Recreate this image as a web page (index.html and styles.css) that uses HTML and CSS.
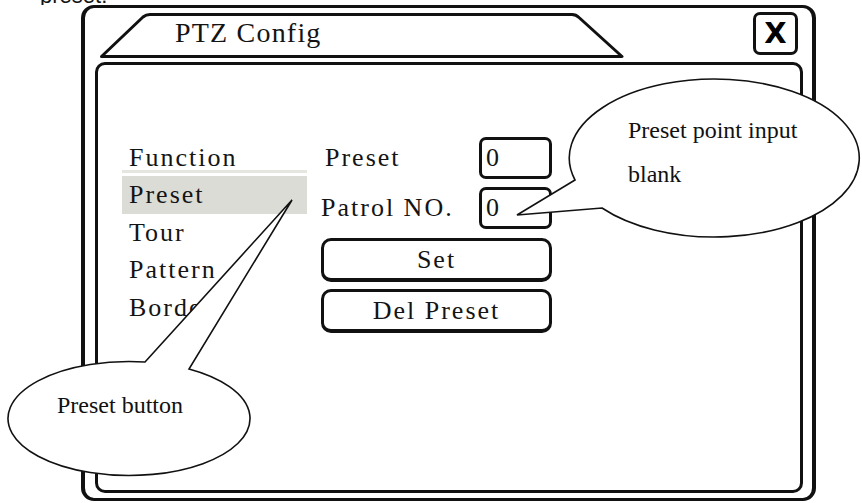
FILE: index.html
```html
<!DOCTYPE html>
<html lang="en">
<head>
  <meta charset="UTF-8">
  <title>PTZ Config</title>
  <link rel="stylesheet" href="styles.css">
</head>
<body>

  <div class="caption"><span>preset.</span></div>

  <div class="dialog">
    <!-- title bar: tab + close -->
    <div class="header">
      <div class="tab">
        <svg class="tab-shape" width="524" height="47" viewBox="0 0 524 47">
          <path d="M1.5,44.5 L43,5 Q46,2.5 50,2.5 L472,2.5 Q476,2.5 479,5.5 L522,44.5 Z" fill="#fff" stroke="#111" stroke-width="3" stroke-linejoin="round"/>
        </svg>
        <span class="tab-title">PTZ Config</span>
      </div>
      <div class="close">X</div>
    </div>

    <div class="panel">
      <ul class="menu">
        <li class="menu-head">Function</li>
        <li class="menu-item active">Preset</li>
        <li class="menu-item">Tour</li>
        <li class="menu-item">Pattern</li>
        <li class="menu-item">Border</li>
      </ul>

      <div class="form">
        <div class="fields">
          <label class="label label-first" for="preset">Preset</label>
          <input class="box" type="text" id="preset" value="0">
          <label class="label" for="patrol">Patrol NO.</label>
          <input class="box" type="text" id="patrol" value="0">
        </div>
        <button class="btn" type="button">Set</button>
        <button class="btn" type="button">Del Preset</button>
      </div>
    </div>
  </div>

  <!-- callout: input box -->
  <div class="note note-right">
    <svg class="note-shape" width="348" height="163" viewBox="515 78 348 163">
      <path d="M575,180 L517,215 L602,208 A145,79 0 1 0 575,180 Z" fill="#fff" stroke="#111" stroke-width="1.6" stroke-linejoin="miter"/>
    </svg>
    <p class="note-text">Preset point input<br>blank</p>
  </div>

  <!-- callout: menu button -->
  <div class="note note-left">
    <svg class="note-shape" width="290" height="280" viewBox="4 198 290 280">
      <path d="M145,362 L292,200 L189,369 A121,57 0 1 1 145,362 Z" fill="#fff" stroke="#111" stroke-width="1.6" stroke-linejoin="miter"/>
    </svg>
    <p class="note-text">Preset button</p>
  </div>

</body>
</html>
```

FILE: styles.css
```css
:root {
  --line: #111;
  --text: #141414;
  --hl: #dcdcd6;
  --hl-line: #e6e6e0;
}
body {
  margin: 0;
  width: 862px;
  height: 503px;
  overflow: hidden;
  position: relative;
  background: #fff;
  color: var(--text);
  font-family: 'Liberation Serif', 'Times New Roman', serif;
}
.caption {
  height: 5px;
  overflow: hidden;
  padding-left: 40px;
  font: 22px/22px 'Liberation Sans', Arial, sans-serif;
}
.caption span {
  display: block;
  margin-top: -15px;
}
.dialog {
  margin-left: 81px;
  width: 735px;
  height: 496px;
  box-sizing: border-box;
  border: 3px solid var(--line);
  border-left-width: 4px;
  border-right-width: 4px;
  border-radius: 13px;
  padding: 0 9px 5px 10px;
  display: flex;
  flex-direction: column;
}
.header {
  height: 54px;
  flex: none;
  box-sizing: border-box;
  padding: 4px 5px 0 5px;
  display: flex;
  align-items: flex-start;
}
.tab {
  position: relative;
  width: 524px;
  height: 47px;
}
.tab-shape {
  position: absolute;
  left: 0;
  top: 0;
}
.tab-title {
  position: relative;
  display: block;
  padding-left: 75px;
  font-size: 28px;
  line-height: 41px;
  letter-spacing: 1.2px;
}
.close {
  margin-left: auto;
  width: 45px;
  height: 43px;
  box-sizing: border-box;
  border: 3px solid var(--line);
  border-radius: 7px;
  display: flex;
  align-items: center;
  justify-content: center;
  font: bold 29px/1 'DejaVu Sans', sans-serif;
  color: #000;
}
.panel {
  flex: 1;
  border: 3px solid var(--line);
  border-radius: 10px;
  padding: 72px 0 0 24px;
  display: flex;
  align-items: flex-start;
}
.menu {
  list-style: none;
  margin: 8px 0 0;
  padding: 0;
  width: 185px;
  font-size: 26px;
  letter-spacing: 2px;
}
.menu-head {
  line-height: 25px;
  padding-left: 7px;
  border-bottom: 3px solid var(--hl-line);
  margin-bottom: 3px;
}
.menu-item {
  line-height: 37.5px;
  padding-left: 7px;
}
.menu-item.active {
  background: var(--hl);
}
.form {
  margin-left: 14px;
  width: 231px;
  display: flex;
  flex-direction: column;
  gap: 7px;
}
.fields {
  display: grid;
  grid-template-columns: 1fr 73px;
  row-gap: 8px;
  align-items: center;
  margin-bottom: 2px;
}
.label {
  font-size: 26px;
  letter-spacing: 2px;
}
.label-first {
  padding-left: 4px;
}
.box {
  width: 73px;
  height: 42px;
  box-sizing: border-box;
  border: 3px solid var(--line);
  border-radius: 7px;
  padding: 0 4px;
  margin: 0;
  font-family: 'Liberation Serif', serif;
  font-size: 26px;
  color: var(--text);
  background: #fff;
  outline: none;
}
.btn {
  height: 44px;
  margin: 0;
  border: 3px solid var(--line);
  border-bottom-width: 4px;
  border-radius: 10px;
  background: #fff;
  color: var(--text);
  font-family: 'Liberation Serif', serif;
  font-size: 26px;
  letter-spacing: 2px;
  padding: 0;
}
.note {
  position: absolute;
}
.note-shape {
  position: absolute;
  left: 0;
  top: 0;
  overflow: visible;
}
.note-text {
  position: relative;
  margin: 0;
  font-size: 24px;
  line-height: 44px;
  color: #111;
}
.note-right {
  left: 515px;
  top: 78px;
  width: 348px;
  height: 163px;
}
.note-right .note-text {
  padding: 30px 0 0 113px;
}
.note-left {
  left: 4px;
  top: 198px;
  width: 290px;
  height: 280px;
}
.note-left .note-text {
  padding: 185px 0 0 53px;
}
```
